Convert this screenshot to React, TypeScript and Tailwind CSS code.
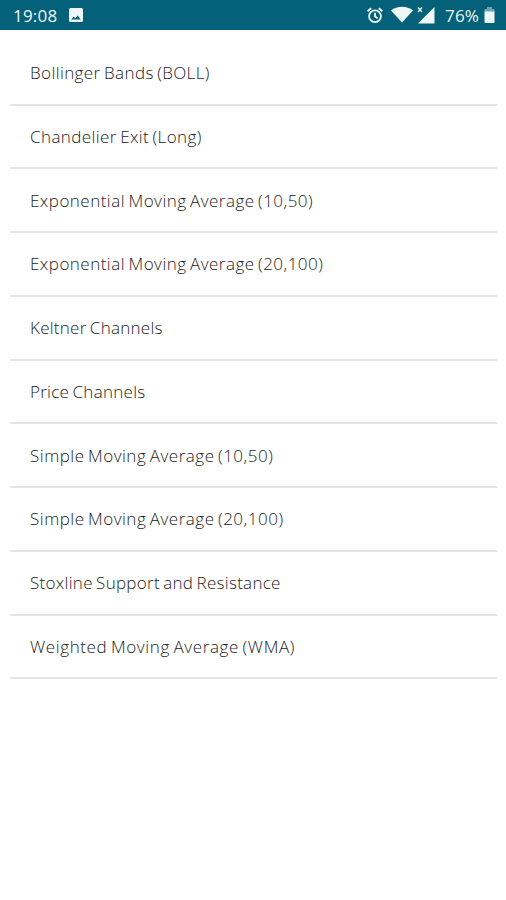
const indicators = [
  { name: "Bollinger Bands (BOLL)", tracking: "tracking-[0.4px]" },
  { name: "Chandelier Exit (Long)", tracking: "tracking-[0.4px]" },
  { name: "Exponential Moving Average (10,50)", tracking: "tracking-[0.48px]" },
  { name: "Exponential Moving Average (20,100)", tracking: "tracking-[0.48px]" },
  { name: "Keltner Channels", tracking: "tracking-[0.26px]" },
  { name: "Price Channels", tracking: "tracking-[0.28px]" },
  { name: "Simple Moving Average (10,50)", tracking: "tracking-[0.51px]" },
  { name: "Simple Moving Average (20,100)", tracking: "tracking-[0.51px]" },
  { name: "Stoxline Support and Resistance", tracking: "tracking-[0.29px]" },
  { name: "Weighted Moving Average (WMA)", tracking: "tracking-[0.62px]" },
];

const PictureIcon = () => (
  <svg width="14" height="14" viewBox="0 0 14 14">
    <path
      fillRule="evenodd"
      fill="currentColor"
      d="M1.5 0h11A1.5 1.5 0 0 1 14 1.5v11a1.5 1.5 0 0 1-1.5 1.5h-11A1.5 1.5 0 0 1 0 12.5v-11A1.5 1.5 0 0 1 1.5 0zM2.3 11.5h9.4L8.7 7.5 6.3 10.3 4.7 8.5z"
    />
  </svg>
);

const AlarmIcon = () => (
  <svg
    width="16"
    height="17"
    viewBox="0 0 16 17"
    fill="none"
    stroke="currentColor"
    strokeWidth="1.8"
  >
    <circle cx="8" cy="9.3" r="5.9" />
    <path d="M.6 4.2 4.2 1.2M15.4 4.2 11.8 1.2M8 5.8v3.8l2.6 1.6" />
  </svg>
);

const WifiIcon = () => (
  <svg width="22" height="17" viewBox="0 0 22 17" fill="currentColor">
    <path d="M0 4.5C6 -.5 16 -.5 22 4.5L11 16.5z" />
  </svg>
);

const SignalIcon = () => (
  <svg width="18" height="18" viewBox="0 0 18 18">
    <path d="M17.5 1v16.5H1z" fill="currentColor" />
    <path
      d="M1 1.5l4 4.5M5 1.5l-4 4.5"
      stroke="currentColor"
      strokeWidth="1.2"
    />
  </svg>
);

const BatteryIcon = () => (
  <svg width="11" height="16" viewBox="0 0 11 16" fill="currentColor">
    <path d="M3 0h5v2h2.5v3H.5V2H3z" opacity=".45" />
    <path d="M.5 4.5h10V15a1 1 0 0 1-1 1h-8a1 1 0 0 1-1-1z" />
  </svg>
);

const StatusBar = () => {
  return (
    <header className="flex h-[30px] items-center justify-between bg-[#05607a] pr-[11px] pl-[13px] text-[17px] leading-[30px] text-[#eef8fa]">
      <div className="flex items-center gap-[11px]">
        <span className="w-[45px] pt-[1px] tracking-[0.2px]">19:08</span>
        <PictureIcon />
      </div>
      <div className="flex items-center">
        <AlarmIcon />
        <div className="ml-2 flex gap-[4px]">
          <WifiIcon />
          <SignalIcon />
        </div>
        <span className="ml-[10px] w-[35px] pt-[1px] whitespace-nowrap tracking-[0.2px]">
          76%
        </span>
        <div className="ml-[4px]">
          <BatteryIcon />
        </div>
      </div>
    </header>
  );
};

const App = () => {
  return (
    <div className="min-h-[900px] bg-white font-['Open_Sans','Noto_Sans',sans-serif]">
      <StatusBar />
      <ul className="mr-[9px] ml-[10px] pt-[11.8px]">
        {indicators.map((indicator) => (
          <li
            key={indicator.name}
            className="flex h-[63.75px] items-center border-b-2 border-[#e4e4e4] pt-[0.5px] pl-5 text-[17px] font-light text-[#1c1c1c] [word-spacing:-1.4px]"
          >
            <span className={indicator.tracking}>{indicator.name}</span>
          </li>
        ))}
      </ul>
    </div>
  );
};

export default App;
